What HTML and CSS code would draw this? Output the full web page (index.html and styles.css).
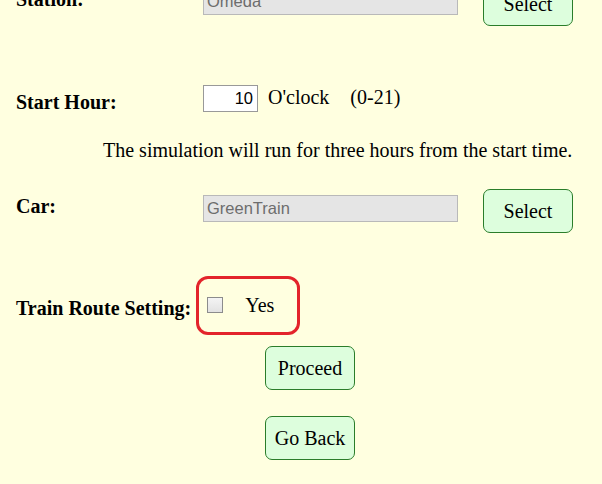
FILE: index.html
```html
<!DOCTYPE html>
<html>
<head>
<meta charset="utf-8">
<link rel="stylesheet" href="styles.css">
</head>
<body>
<div class="form">
  <div class="row row-select row-station">
    <div class="label">Station:</div>
    <input class="field" type="text" value="Omeda" readonly>
    <button class="btn">Select</button>
  </div>
  <div class="row row-hour">
    <div class="label">Start Hour:</div>
    <input class="hour" type="text" value="10">
    <span class="unit">O'clock</span>
    <span class="range">(0-21)</span>
  </div>
  <p class="note">The simulation will run for three hours from the start time.</p>
  <div class="row row-select row-car">
    <div class="label">Car:</div>
    <input class="field" type="text" value="GreenTrain" readonly>
    <button class="btn">Select</button>
  </div>
  <div class="row row-route">
    <div class="label label-route">Train Route Setting:</div>
    <label class="highlight">
      <input class="check" type="checkbox">
      <span class="yes">Yes</span>
    </label>
  </div>
  <div class="actions">
    <button class="btn btn-proceed">Proceed</button>
    <button class="btn btn-back">Go Back</button>
  </div>
</div>
</body>
</html>
```
FILE: styles.css
```css
html, body {
  margin: 0;
  padding: 0;
  background: #ffffe0;
  overflow: hidden;
}
body {
  font-family: "Liberation Serif", "Times New Roman", serif;
  font-size: 20px;
  line-height: 23px;
  color: #000;
  height: 484px;
}
.form {
  padding-left: 16px;
}
.row {
  display: flex;
  align-items: flex-start;
}
.label {
  width: 187px;
  flex: none;
  font-weight: bold;
  margin-top: 6px;
}
.row-select {
  height: 44px;
}
.row-station {
  margin-top: -18px;
}
.field {
  box-sizing: border-box;
  width: 255px;
  height: 27px;
  margin: 6px 0 0 0;
  padding: 0 0 0 3px;
  border: 1px solid #b9b9b9;
  background: #e5e5e5;
  color: #6d6d6d;
  font-family: "Liberation Sans", Arial, sans-serif;
  font-size: 16.5px;
  outline: none;
}
.btn {
  box-sizing: border-box;
  width: 90px;
  height: 44px;
  margin: 0 0 0 25px;
  padding: 0;
  border: 1.5px solid #2a7d2a;
  border-radius: 7px;
  background: #ddfedd;
  color: #000;
  font-family: "Liberation Serif", "Times New Roman", serif;
  font-size: 20px;
}
.row-hour {
  margin-top: 59px;
  height: 27px;
}
.hour {
  box-sizing: border-box;
  width: 55px;
  height: 27px;
  margin: 0;
  padding: 0 4px 0 0;
  border: 1px solid #999;
  background: #fff;
  color: #000;
  text-align: right;
  font-family: "Liberation Sans", Arial, sans-serif;
  font-size: 16.5px;
  outline: none;
}
.unit {
  margin: 1px 0 0 10px;
}
.range {
  margin: 1px 0 0 21px;
}
.note {
  margin: 27px 0 0 87px;
}
.row-car {
  margin-top: 27px;
}
.row-route {
  margin-top: 43px;
  height: 59px;
}
.label-route {
  width: auto;
  margin-top: 21px;
  margin-right: 5px;
}
.highlight {
  box-sizing: border-box;
  width: 104px;
  height: 59px;
  border: 3px solid #e3242b;
  border-radius: 12px;
  display: flex;
  align-items: flex-start;
  padding: 18px 0 0 8px;
}
.check {
  appearance: none;
  -webkit-appearance: none;
  box-sizing: border-box;
  width: 16px;
  height: 16px;
  margin: 0;
  border: 1px solid #8c8c8c;
  background: linear-gradient(#f4f4f4, #e2e2e2);
}
.yes {
  margin: -3px 0 0 22px;
}
.actions {
  display: flex;
  flex-direction: column;
  align-items: flex-start;
  padding-left: 249px;
}
.actions .btn {
  margin-left: 0;
}
.btn-proceed {
  margin-top: 11px;
}
.btn-back {
  margin-top: 26px;
}
```
